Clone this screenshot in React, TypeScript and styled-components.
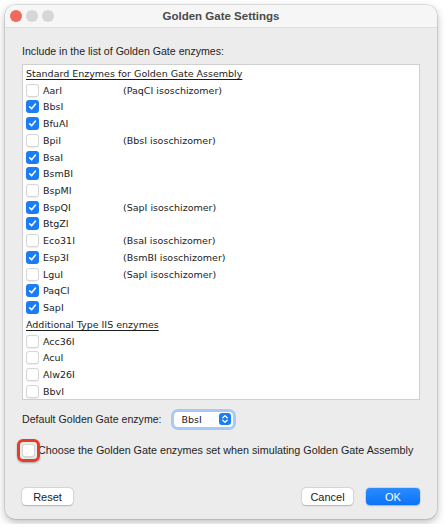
import React from "react";
import styled, { createGlobalStyle } from "styled-components";

const GlobalStyle = createGlobalStyle`
  html, body {
    margin: 0;
    padding: 0;
    background: #ffffff;
  }
  body {
    font-family: "Liberation Sans", Arial, sans-serif;
    -webkit-font-smoothing: antialiased;
  }
`;

type Enzyme = { name: string; checked: boolean; note?: string };
type Group = { title: string; items: Enzyme[] };

const groups: Group[] = [
  {
    title: "Standard Enzymes for Golden Gate Assembly",
    items: [
      { name: "AarI", checked: false, note: "(PaqCI isoschizomer)" },
      { name: "BbsI", checked: true },
      { name: "BfuAI", checked: true },
      { name: "BpiI", checked: false, note: "(BbsI isoschizomer)" },
      { name: "BsaI", checked: true },
      { name: "BsmBI", checked: true },
      { name: "BspMI", checked: false },
      { name: "BspQI", checked: true, note: "(SapI isoschizomer)" },
      { name: "BtgZI", checked: true },
      { name: "Eco31I", checked: false, note: "(BsaI isoschizomer)" },
      { name: "Esp3I", checked: true, note: "(BsmBI isoschizomer)" },
      { name: "LguI", checked: false, note: "(SapI isoschizomer)" },
      { name: "PaqCI", checked: true },
      { name: "SapI", checked: true },
    ],
  },
  {
    title: "Additional Type IIS enzymes",
    items: [
      { name: "Acc36I", checked: false },
      { name: "AcuI", checked: false },
      { name: "Alw26I", checked: false },
      { name: "BbvI", checked: false },
    ],
  },
];

const Window = styled.div`
  margin: 5px;
  width: 432px;
  height: 514px;
  border-radius: 10px;
  background: #ececec;
  box-shadow: 0 0 0 0.5px rgba(0, 0, 0, 0.18), 0 3px 9px rgba(0, 0, 0, 0.28);
  overflow: hidden;
  display: flex;
  flex-direction: column;
`;

const TitleBar = styled.div`
  position: relative;
  height: 22px;
  flex-shrink: 0;
  background: #f6f6f6;
  border-bottom: 1px solid #dedede;
  display: flex;
  align-items: center;
  justify-content: center;
`;

const Lights = styled.div`
  position: absolute;
  left: 5px;
  top: 5px;
  display: flex;
  gap: 4px;
`;

const Light = styled.span<{ $color: string }>`
  width: 12px;
  height: 12px;
  border-radius: 50%;
  background: ${(p) => p.$color};
`;

const Title = styled.div`
  font-size: 11.5px;
  font-weight: bold;
  color: #4a4a4a;
`;

const Body = styled.div`
  flex: 1;
  display: flex;
  flex-direction: column;
  padding: 16px 17px 14px 17px;
`;

const Caption = styled.div<{ $size?: number }>`
  font-size: ${(p) => p.$size ?? 10.6}px;
  color: #1e1e1e;
  line-height: 14px;
  white-space: nowrap;
`;

const ListBox = styled.div`
  margin-top: 6px;
  height: 334px;
  background: #ffffff;
  border: 1px solid #cfcfcf;
  overflow: hidden;
  padding: 0 0 0 3px;
  font-family: "DejaVu Sans", Verdana, sans-serif;
  font-size: 9.5px;
  color: #1c1c1c;
`;

const GroupTitle = styled.div`
  height: 16.74px;
  display: flex;
  align-items: center;
  text-decoration: underline;
  text-underline-offset: 2px;
`;

const Row = styled.div`
  height: 16.74px;
  display: grid;
  grid-template-columns: 13px 76px auto;
  column-gap: 4px;
  align-items: center;
`;

const Box = styled.span<{ $on: boolean }>`
  position: relative;
  width: 13px;
  height: 13px;
  box-sizing: border-box;
  border-radius: 3px;
  display: inline-flex;
  align-items: center;
  justify-content: center;
  background: ${(p) => (p.$on ? "#1a7df6" : "#ffffff")};
  border: ${(p) => (p.$on ? "none" : "1px solid #d6d6d6")};
  box-shadow: ${(p) => (p.$on ? "none" : "0 0.5px 1px rgba(0,0,0,0.08)")};
`;

const CheckMark = () => (
  <svg width="9" height="9" viewBox="0 0 10 10">
    <path
      d="M1.8 5.3 L4 7.6 L8.3 2.2"
      fill="none"
      stroke="#ffffff"
      strokeWidth="1.7"
      strokeLinecap="round"
      strokeLinejoin="round"
    />
  </svg>
);

const Check = ({ on }: { on: boolean }) => (
  <Box $on={on}>{on && <CheckMark />}</Box>
);

const DefaultRow = styled.div`
  margin-top: 9px;
  display: flex;
  align-items: center;
  gap: 12px;
  height: 20px;
`;

const Select = styled.div`
  width: 59px;
  height: 15px;
  box-sizing: border-box;
  background: #ffffff;
  border-radius: 4px;
  box-shadow: 0 0 0 3px #a9c9f4, 0 0.5px 1px rgba(0, 0, 0, 0.25);
  display: flex;
  align-items: center;
  justify-content: space-between;
  padding: 0 2px 0 8px;
  font-family: "DejaVu Sans", Verdana, sans-serif;
  font-size: 9.5px;
  color: #1c1c1c;
`;

const Stepper = styled.span`
  width: 12px;
  height: 12px;
  border-radius: 3px;
  background: #1a7df6;
  display: inline-flex;
  align-items: center;
  justify-content: center;
`;

const AssemblyRow = styled.div`
  margin-top: 13px;
  display: flex;
  align-items: center;
  gap: 3px;
  height: 16px;
`;

const Marked = styled.span`
  position: relative;
  display: inline-flex;
`;

/* red highlight drawn around the checkbox */
const RedRing = styled.span`
  position: absolute;
  left: -5px;
  top: -5px;
  width: 23px;
  height: 23px;
  box-sizing: border-box;
  border: 3.5px solid #e63c28;
  border-radius: 6px;
  box-shadow: 0 1px 2px rgba(0, 0, 0, 0.3);
`;

const Spacer = styled.div`
  flex: 1;
`;

const Footer = styled.div`
  display: flex;
  align-items: center;
  gap: 13px;
`;

const Button = styled.button<{ $primary?: boolean }>`
  height: 17px;
  padding: 0;
  width: ${(p) => (p.$primary ? "54px" : "51px")};
  border: none;
  border-radius: 4px;
  font-family: "Liberation Sans", Arial, sans-serif;
  font-size: 11px;
  color: ${(p) => (p.$primary ? "#ffffff" : "#222222")};
  background: ${(p) =>
    p.$primary ? "linear-gradient(#2b8bff, #0a74f7)" : "#ffffff"};
  box-shadow: 0 0 0 0.5px rgba(0, 0, 0, 0.12), 0 0.5px 1.5px rgba(0, 0, 0, 0.2);
`;

export default function App() {
  return (
    <>
      <GlobalStyle />
      <Window>
        <TitleBar>
          <Lights>
            <Light $color="#ee6a5f" />
            <Light $color="#d6d6d6" />
            <Light $color="#d6d6d6" />
          </Lights>
          <Title>Golden Gate Settings</Title>
        </TitleBar>
        <Body>
          <Caption>Include in the list of Golden Gate enzymes:</Caption>
          <ListBox>
            {groups.map((g) => (
              <React.Fragment key={g.title}>
                <GroupTitle>{g.title}</GroupTitle>
                {g.items.map((e) => (
                  <Row key={e.name}>
                    <Check on={e.checked} />
                    <span>{e.name}</span>
                    <span>{e.note}</span>
                  </Row>
                ))}
              </React.Fragment>
            ))}
          </ListBox>
          <DefaultRow>
            <Caption>Default Golden Gate enzyme:</Caption>
            <Select>
              <span>BbsI</span>
              <Stepper>
                <svg width="8" height="10" viewBox="0 0 8 10">
                  <path
                    d="M1.8 3.8 L4 1.6 L6.2 3.8 M1.8 6.2 L4 8.4 L6.2 6.2"
                    fill="none"
                    stroke="#ffffff"
                    strokeWidth="1.3"
                    strokeLinecap="round"
                    strokeLinejoin="round"
                  />
                </svg>
              </Stepper>
            </Select>
          </DefaultRow>
          <AssemblyRow>
            <Marked>
              <Check on={false} />
              <RedRing />
            </Marked>
            <Caption $size={10.75}>
              Choose the Golden Gate enzymes set when simulating Golden Gate
              Assembly
            </Caption>
          </AssemblyRow>
          <Spacer />
          <Footer>
            <Button>Reset</Button>
            <Spacer />
            <Button>Cancel</Button>
            <Button $primary>OK</Button>
          </Footer>
        </Body>
      </Window>
    </>
  );
}
